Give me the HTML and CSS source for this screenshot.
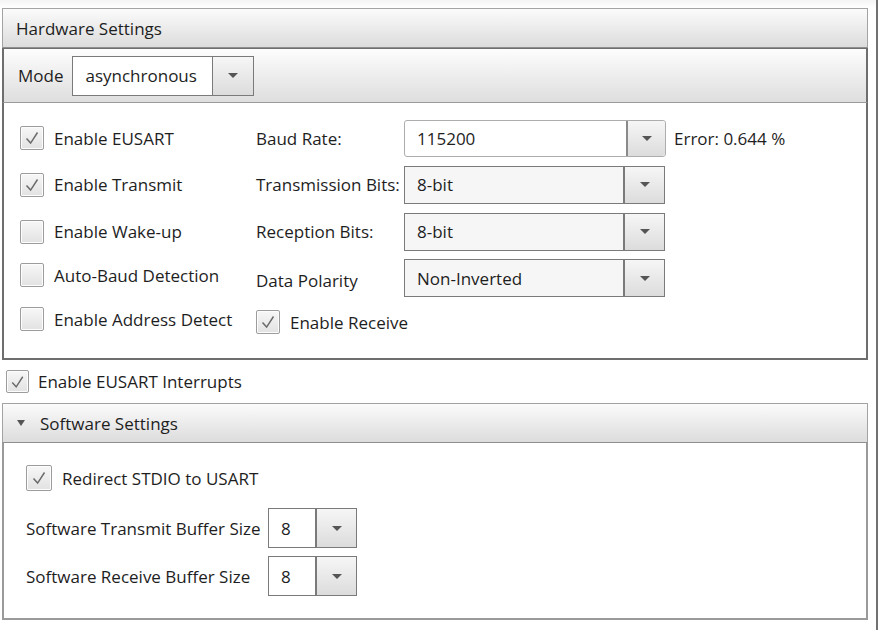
FILE: index.html
```html
<!DOCTYPE html>
<html>
<head>
<meta charset="utf-8">
<link rel="stylesheet" href="styles.css">
</head>
<body>
<div class="frame">
  <section class="hw">
    <div class="hdr">Hardware Settings</div>
    <div class="modebar">
      <span class="lbl">Mode</span>
      <div class="combo mode"><span class="val">asynchronous</span><span class="arr"><i></i></span></div>
    </div>
    <div class="hwbody">
      <label class="chk r1"><span class="box on"><svg viewBox="0 0 24 24"><polyline points="6,12.5 10.5,17.5 18,6"/></svg></span>Enable EUSART</label>
      <span class="flbl r1">Baud Rate:</span>
      <div class="r1 c3 baudrow">
        <div class="combo baud"><span class="val">115200</span><span class="arr"><i></i></span></div>
        <span class="err">Error: 0.644 %</span>
      </div>

      <label class="chk r2"><span class="box on"><svg viewBox="0 0 24 24"><polyline points="6,12.5 10.5,17.5 18,6"/></svg></span>Enable Transmit</label>
      <span class="flbl r2">Transmission Bits:</span>
      <div class="r2 c3"><div class="combo sel"><span class="val">8-bit</span><span class="arr"><i></i></span></div></div>

      <label class="chk r3"><span class="box"></span>Enable Wake-up</label>
      <span class="flbl r3">Reception Bits:</span>
      <div class="r3 c3"><div class="combo sel"><span class="val">8-bit</span><span class="arr"><i></i></span></div></div>

      <label class="chk r4 up"><span class="box"></span>Auto-Baud Detection</label>
      <span class="flbl r4 down">Data Polarity</span>
      <div class="r4 c3"><div class="combo sel"><span class="val">Non-Inverted</span><span class="arr"><i></i></span></div></div>

      <label class="chk r5 up"><span class="box"></span>Enable Address Detect</label>
      <label class="chk r5 c2"><span class="box on"><svg viewBox="0 0 24 24"><polyline points="6,12.5 10.5,17.5 18,6"/></svg></span>Enable Receive</label>
    </div>
  </section>

  <label class="chk intr"><span class="box on"><svg viewBox="0 0 24 24"><polyline points="6,12.5 10.5,17.5 18,6"/></svg></span>Enable EUSART Interrupts</label>

  <section class="sw">
    <div class="hdr swhdr"><span class="tri"></span>Software Settings</div>
    <div class="swbody">
      <label class="chk redir"><span class="box on"><svg viewBox="0 0 24 24"><polyline points="6,12.5 10.5,17.5 18,6"/></svg></span>Redirect STDIO to USART</label>
      <div class="bufgrid">
        <span class="buflbl">Software Transmit Buffer Size</span>
        <div class="combo small"><span class="val">8</span><span class="arr"><i></i></span></div>
        <span class="buflbl">Software Receive Buffer Size</span>
        <div class="combo small"><span class="val">8</span><span class="arr"><i></i></span></div>
      </div>
    </div>
  </section>
</div>
</body>
</html>
```
FILE: styles.css
```css
* { box-sizing: border-box; }
html, body { margin: 0; padding: 0; }
body {
  width: 878px;
  height: 630px;
  overflow: hidden;
  background: #fff;
  font-family: "Open Sans", "Noto Sans", sans-serif;
  font-size: 17px;
  color: #1e1e1e;
}
.frame {
  width: 878px;
  height: 630px;
  border-right: 2px solid #6f7172;
  padding: 8px 8px 0 2px;
  background: linear-gradient(#f4f4f4, #fff 8px);
}
.hdr {
  height: 40px;
  display: flex;
  align-items: center;
  padding-left: 13px;
  border: 1px solid #a3a3a3;
  border-bottom: 1px solid #8e8e8e;
  background: linear-gradient(#fbfbfb, #dcdcdc);
}
.modebar {
  height: 55px;
  display: flex;
  align-items: center;
  padding-left: 14px;
  gap: 9px;
  border: 2px solid #6e6e6e;
  border-top: 1px solid #6e6e6e;
  border-bottom: 1px solid #9b9b9b;
  background: linear-gradient(#fdfdfd, #dedede);
}
.hwbody {
  height: 257px;
  border: 2px solid #6e6e6e;
  border-top: none;
  background: #fff;
  display: grid;
  grid-template-columns: 236px 148px 1fr;
  grid-template-rows: 46px 47px 47px 46px 42px;
  padding: 12px 0 0 16px;
  align-items: center;
}
.r1 { grid-row: 1; }
.r2 { grid-row: 2; }
.r3 { grid-row: 3; }
.r4 { grid-row: 4; }
.r5 { grid-row: 5; }
.c2 { grid-column: 2 / 4; }
.c3 { grid-column: 3; }
.up { position: relative; top: -3px; }
.down { position: relative; top: 2px; }
.flbl { grid-column: 2; white-space: nowrap; }
.baudrow { display: flex; align-items: center; gap: 8px; }

.chk { display: flex; align-items: center; gap: 10px; white-space: nowrap; }
.box {
  width: 24px;
  height: 24px;
  flex: none;
  border: 1px solid #9c9c9c;
  border-radius: 2px;
  background: linear-gradient(#f7f7f7, #e2e2e2);
  box-shadow: inset 0 0 0 1px #fdfdfd;
  display: flex;
  align-items: center;
  justify-content: center;
}
.box svg { width: 22px; height: 22px; }
.box polyline { fill: none; stroke: #6a6a6a; stroke-width: 1.6; }

.combo {
  display: flex;
  height: 38px;
  border: 1px solid #7a7a7a;
  background: #f6f6f6;
}
.combo .val {
  flex: 1;
  display: flex;
  align-items: center;
  padding-left: 12px;
}
.combo .arr {
  width: 41px;
  flex: none;
  border-left: 2px solid #7a7a7a;
  background: linear-gradient(#f6f6f6, #dcdcdc);
  display: flex;
  align-items: center;
  justify-content: center;
}
.arr i {
  width: 0; height: 0;
  border-left: 5px solid transparent;
  border-right: 5px solid transparent;
  border-top: 5px solid #555;
}
.mode { width: 182px; height: 40px; background: #fff; }
.mode .arr { border-left: 1px solid #7a7a7a; }
.mode .val { padding-left: 12px; }
.sel { width: 261px; }
.baud {
  width: 262px;
  height: 37px;
  border: 1px solid #adadad;
  border-radius: 3px;
  background: #fff;
}
.baud .arr { width: 39px; border-left: 2px solid #8a8a8a; border-radius: 0 3px 3px 0; }
.err { white-space: nowrap; }

.intr { height: 43px; padding-left: 4px; gap: 9px; }
.intr .box { width: 23px; height: 23px; }

.swhdr { padding-left: 14px; }
.tri {
  width: 0; height: 0;
  border-left: 4px solid transparent;
  border-right: 4px solid transparent;
  border-top: 6px solid #555;
  margin-right: 15px;
}
.swbody {
  height: 177px;
  border: 2px solid #9a9a9a;
  border-top: none;
  padding: 22px 0 0 22px;
}
.redir { gap: 10px; margin-bottom: 13px; }
.redir .box { width: 26px; height: 26px; }
.bufgrid {
  display: grid;
  grid-template-columns: 242px 89px;
  grid-auto-rows: 48px;
  align-items: center;
}
.buflbl { white-space: nowrap; }
.small { width: 89px; height: 40px; background: #fff; }
.small .val { padding-left: 12px; }
.small .arr { border-left: 2px solid #7a7a7a; }
```
